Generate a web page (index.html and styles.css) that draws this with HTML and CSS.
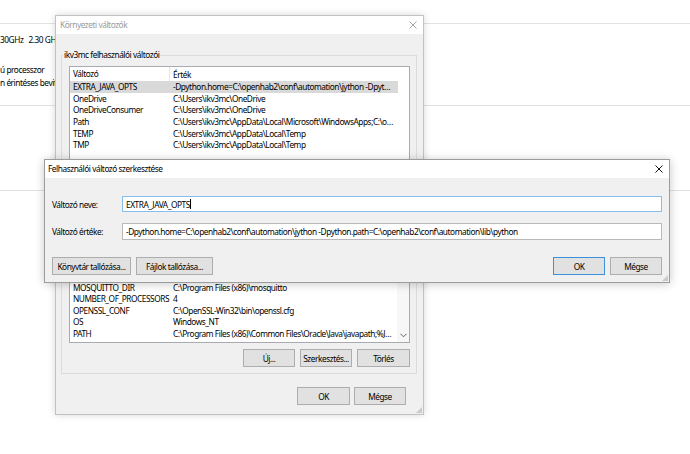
FILE: index.html
```html
<!DOCTYPE html>
<html>
<head>
<meta charset="utf-8">
<link rel="stylesheet" href="styles.css">
</head>
<body>
<div class="desk">
  <div class="bg">
    <div class="bg-top"></div>
    <div class="bg-info">
      <div class="bg-line first">30GHz   2.30 GHz</div>
      <div class="bg-line gap">ú processzor</div>
      <div class="bg-line">n érintéses bevitel</div>
    </div>
    <div class="bg-sys"></div>
  </div>

  <div class="win back">
    <div class="titlebar">
      <span class="title inactive">Környezeti változók</span>
      <span class="close"><svg width="8" height="8" viewBox="0 0 8 8"><path d="M0.5 0.5L7.5 7.5M7.5 0.5L0.5 7.5" stroke="#9a9a9a" stroke-width="0.9" fill="none"/></svg></span>
    </div>
    <div class="bbody">
      <fieldset class="group g1">
        <legend>ikv3mc felhasználói változói</legend>
        <div class="list l1">
          <div class="lcontent">
            <div class="lhead"><span class="c1">Változó</span><span class="c2">Érték</span></div>
            <div class="row sel"><span class="c1">EXTRA_JAVA_OPTS</span><span class="c2">-Dpython.home=C:\openhab2\conf\automation\jython -Dpython.path=C:\openhab2\conf\automation\lib\python</span></div>
            <div class="row"><span class="c1">OneDrive</span><span class="c2">C:\Users\ikv3mc\OneDrive</span></div>
            <div class="row"><span class="c1">OneDriveConsumer</span><span class="c2">C:\Users\ikv3mc\OneDrive</span></div>
            <div class="row"><span class="c1">Path</span><span class="c2">C:\Users\ikv3mc\AppData\Local\Microsoft\WindowsApps;C:\openhab2</span></div>
            <div class="row"><span class="c1">TEMP</span><span class="c2">C:\Users\ikv3mc\AppData\Local\Temp</span></div>
            <div class="row"><span class="c1">TMP</span><span class="c2">C:\Users\ikv3mc\AppData\Local\Temp</span></div>
          </div>
        </div>
        <div class="gbtns">
          <span class="btn w52">Új...</span><span class="btn w52">Szerkesztés...</span><span class="btn w53">Törlés</span>
        </div>
      </fieldset>
      <fieldset class="group g2">
        <legend>Rendszerváltozók</legend>
        <div class="list l2">
          <div class="lcontent">
            <div class="lhead"><span class="c1">Változó</span><span class="c2">Érték</span></div>
            <div class="row"><span class="c1">ComSpec</span><span class="c2">C:\WINDOWS\system32\cmd.exe</span></div>
            <div class="row"><span class="c1">DriverData</span><span class="c2">C:\Windows\System32\Drivers\DriverData</span></div>
            <div class="row"><span class="c1">JAVA_HOME</span><span class="c2">C:\Program Files\Java\jre1.8.0</span></div>
            <div class="row"><span class="c1">JYTHON_HOME</span><span class="c2">C:\jython2.7.0</span></div>
            <div class="row"><span class="c1">MOSQUITTO_DIR</span><span class="c2">C:\Program Files (x86)\mosquitto</span></div>
            <div class="row"><span class="c1">NUMBER_OF_PROCESSORS</span><span class="c2">4</span></div>
            <div class="row"><span class="c1">OPENSSL_CONF</span><span class="c2">C:\OpenSSL-Win32\bin\openssl.cfg</span></div>
            <div class="row"><span class="c1">OS</span><span class="c2">Windows_NT</span></div>
            <div class="row"><span class="c1">PATH</span><span class="c2">C:\Program Files (x86)\Common Files\Oracle\Java\javapath;%JAVA_HOME%\bin</span></div>
          </div>
          <div class="vscroll">
            <span class="sarrow"><svg width="7" height="5" viewBox="0 0 7 5"><path d="M0.5 0.8L3.5 3.8L6.5 0.8" stroke="#606060" stroke-width="1" fill="none"/></svg></span>
          </div>
        </div>
        <div class="gbtns">
          <span class="btn w52">Új...</span><span class="btn w52">Szerkesztés...</span><span class="btn w53">Törlés</span>
        </div>
      </fieldset>
      <div class="bfoot">
        <span class="btn w53">OK</span><span class="btn w52">Mégse</span>
      </div>
    </div>
    <span class="grip"></span>
  </div>

  <div class="win front">
    <div class="titlebar">
      <span class="title ftitle">Felhasználói változó szerkesztése</span>
      <span class="close"><svg width="8" height="8" viewBox="0 0 8 8"><path d="M0.5 0.5L7.5 7.5M7.5 0.5L0.5 7.5" stroke="#111" stroke-width="1" fill="none"/></svg></span>
    </div>
    <div class="fbody">
      <div class="field f1">
        <span class="flabel">Változó neve:</span>
        <span class="input focus">EXTRA_JAVA_OPTS<span class="caret"></span></span>
      </div>
      <div class="field f2">
        <span class="flabel">Változó értéke:</span>
        <span class="input">-Dpython.home=C:\openhab2\conf\automation\jython -Dpython.path=C:\openhab2\conf\automation\lib\python</span>
      </div>
      <div class="fbtns">
        <div class="bgroup">
          <span class="btn w79">Könyvtár tallózása...</span><span class="btn w77">Fájlok tallózása...</span>
        </div>
        <div class="bgroup">
          <span class="btn w52 default">OK</span><span class="btn w52">Mégse</span>
        </div>
      </div>
    </div>
    <span class="grip"></span>
  </div>
</div>
</body>
</html>
```

FILE: styles.css
```css
* { box-sizing: border-box; }
html, body { margin: 0; padding: 0; }
body {
  width: 690px;
  height: 454px;
  overflow: hidden;
  background: #fff;
  font-family: "Noto Sans", "Open Sans", sans-serif;
  font-size: 8.3px;
  letter-spacing: -0.45px;
  color: #000;
}
.desk { position: relative; width: 690px; height: 454px; }

/* background settings page */
.bg { display: flex; flex-direction: column; }
.bg-top { height: 24px; border-bottom: 1px solid #e2e2e2; }
.bg-info { height: 82px; border-bottom: 1px solid #e2e2e2; padding-top: 8.5px; }
.bg-line { height: 13px; line-height: 13px; white-space: pre; }
.bg-line.gap { margin-top: 17px; }
.bg-sys { height: 85px; border-bottom: 1px solid #e2e2e2; }

/* windows */
.win {
  position: absolute;
  display: flex;
  flex-direction: column;
  background: #f0f0f0;
}
.titlebar {
  flex: none;
  height: 18px;
  background: #fff;
  display: flex;
  align-items: center;
  justify-content: space-between;
}
.title { white-space: nowrap; line-height: 18px; }
.title.inactive { color: #9b9b9b; padding-left: 4px; }
.title.ftitle { padding-left: 3px; }
.close {
  width: 20px;
  height: 18px;
  display: flex;
  align-items: center;
  justify-content: center;
}
.grip {
  position: absolute;
  right: 1px;
  bottom: 1px;
  width: 6px;
  height: 6px;
  background:
    radial-gradient(circle, #b5b5b5 0.6px, transparent 0.9px) 0 0 / 2px 2px;
  clip-path: polygon(100% 0, 100% 100%, 0 100%);
}

/* back dialog */
.back {
  left: 55px;
  top: 15px;
  width: 369px;
  height: 400px;
  border: 1px solid #c2c2c2;
  box-shadow: 0 0 7px rgba(0, 0, 0, 0.16);
}
.bbody {
  flex: 1;
  display: flex;
  flex-direction: column;
  padding: 15px 6px 0 5px;
}
.group {
  margin: 0;
  padding: 5px 6px 6px 7px;
  border: 1px solid #dcdcdc;
  min-width: 0;
  display: flex;
  flex-direction: column;
}
.group legend {
  margin-left: -6px;
  padding: 0 1px;
  line-height: 12px;
  height: 12px;
  white-space: nowrap;
}
.g1 { height: 150px; }
.g2 { height: 171px; margin-top: 4px; }
.list {
  background: #fff;
  border: 1px solid #a9abb0;
  display: flex;
  overflow: hidden;
}
.l1 { height: 102px; }
.l2 { height: 123px; }
.lcontent { flex: 1; min-width: 0; display: flex; flex-direction: column; }
.lhead {
  height: 14px;
  flex: none;
  display: flex;
  align-items: center;
}
.lhead .c1 { border-right: 1px solid #e5e5e5; height: 14px; line-height: 14px; }
.row {
  height: 11.6px;
  flex: none;
  display: flex;
  align-items: center;
  width: 328px;
}
.row.sel { background: #d9d9d9; }
.c1 {
  width: 100px;
  flex: none;
  padding-left: 3px;
  white-space: nowrap;
  overflow: hidden;
}
.c2 {
  width: 228px;
  flex: none;
  padding-left: 3px;
  padding-right: 3px;
  white-space: nowrap;
  overflow: hidden;
  text-overflow: ellipsis;
}
.vscroll {
  width: 12px;
  flex: none;
  background: #f7f7f7;
  display: flex;
  flex-direction: column;
  justify-content: flex-end;
}
.sarrow {
  height: 14px;
  display: flex;
  align-items: center;
  justify-content: center;
}
.gbtns {
  display: flex;
  justify-content: flex-end;
  gap: 5px;
  margin-top: 6px;
}
.bfoot {
  display: flex;
  justify-content: flex-end;
  gap: 4px;
  margin-top: 13px;
  margin-right: 11px;
}

/* buttons */
.btn {
  height: 18px;
  background: #e1e1e1;
  border: 1px solid #adadad;
  display: flex;
  align-items: center;
  justify-content: center;
  white-space: nowrap;
  flex: none;
}
.btn.default { border-color: #3c8fdb; }
.w52 { width: 52px; }
.w53 { width: 53px; }
.w77 { width: 77px; }
.w79 { width: 79px; }

/* front dialog */
.front {
  left: 44px;
  top: 159px;
  width: 626px;
  height: 124px;
  border: 1px solid #9c9c9c;
  box-shadow: 0 1px 9px rgba(0, 0, 0, 0.22);
}
.fbody {
  flex: 1;
  display: flex;
  flex-direction: column;
  padding: 18px 7px 0 7px;
}
.field { display: flex; align-items: center; }
.f1 { height: 16px; }
.f2 { height: 17px; margin-top: 11px; }
.flabel { width: 70px; flex: none; white-space: nowrap; }
.input {
  flex: 1;
  height: 100%;
  background: #fff;
  border: 1px solid #b9b9b9;
  padding-left: 3px;
  display: flex;
  align-items: center;
  white-space: nowrap;
  overflow: hidden;
}
.input.focus { border-color: #86bdea; }
.caret { display: inline-block; width: 1px; height: 10px; background: #000; margin-left: 0.5px; }
.fbtns {
  display: flex;
  justify-content: space-between;
  margin-top: 17px;
}
.bgroup { display: flex; gap: 5px; }
```
